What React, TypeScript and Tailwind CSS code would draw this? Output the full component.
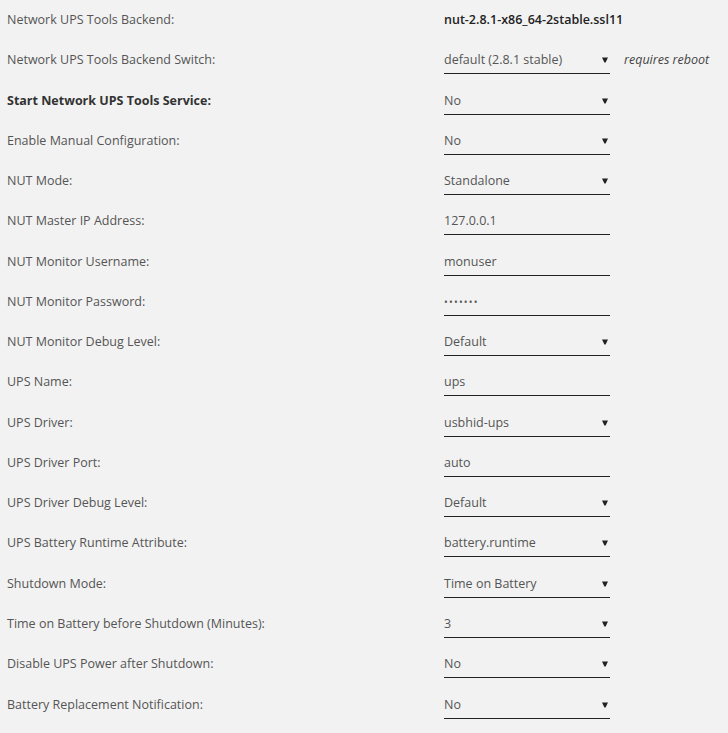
import React from "react";

type Field =
  | { label: string; kind: "static"; value: string; bold?: boolean }
  | { label: string; kind: "select"; value: string; bold?: boolean; note?: string }
  | { label: string; kind: "input"; value: string; bold?: boolean };

const fields: Field[] = [
  { label: "Network UPS Tools Backend:", kind: "static", value: "nut-2.8.1-x86_64-2stable.ssl11" },
  { label: "Network UPS Tools Backend Switch:", kind: "select", value: "default (2.8.1 stable)", note: "requires reboot" },
  { label: "Start Network UPS Tools Service:", kind: "select", value: "No", bold: true },
  { label: "Enable Manual Configuration:", kind: "select", value: "No" },
  { label: "NUT Mode:", kind: "select", value: "Standalone" },
  { label: "NUT Master IP Address:", kind: "input", value: "127.0.0.1" },
  { label: "NUT Monitor Username:", kind: "input", value: "monuser" },
  { label: "NUT Monitor Password:", kind: "input", value: "•••••••" },
  { label: "NUT Monitor Debug Level:", kind: "select", value: "Default" },
  { label: "UPS Name:", kind: "input", value: "ups" },
  { label: "UPS Driver:", kind: "select", value: "usbhid-ups" },
  { label: "UPS Driver Port:", kind: "input", value: "auto" },
  { label: "UPS Driver Debug Level:", kind: "select", value: "Default" },
  { label: "UPS Battery Runtime Attribute:", kind: "select", value: "battery.runtime" },
  { label: "Shutdown Mode:", kind: "select", value: "Time on Battery" },
  { label: "Time on Battery before Shutdown (Minutes):", kind: "select", value: "3" },
  { label: "Disable UPS Power after Shutdown:", kind: "select", value: "No" },
  { label: "Battery Replacement Notification:", kind: "select", value: "No" },
];

function Caret() {
  return (
    <svg width="6" height="6" viewBox="0 0 6 6" className="shrink-0">
      <path d="M0 0.5 H6 L3.6 5.5 H2.4 Z" fill="#222" />
    </svg>
  );
}

function Control({ field }: { field: Field }) {
  if (field.kind === "static") {
    return <span className="font-semibold text-[#222]">{field.value}</span>;
  }
  return (
    <div className="flex items-start">
      <div className="w-[166px] h-[24px] border-b border-[#222] flex items-start justify-between pr-[2px]">
        <span className={field.value.startsWith("•") ? "text-[10px] tracking-[1.2px]" : ""}>
          {field.value}
        </span>
        {field.kind === "select" && (
          <span className="h-[20px] flex items-center">
            <Caret />
          </span>
        )}
      </div>
      {field.kind === "select" && field.note && (
        <span className="ml-[14px] italic text-[#444]">{field.note}</span>
      )}
    </div>
  );
}

export default function App() {
  return (
    <div
      className="min-h-[733px] w-full bg-[#f2f2f2] text-[12.5px] leading-[20px] text-[#555]"
      style={{ fontFamily: '"Open Sans", "Liberation Sans", sans-serif' }}
    >
      {fields.map((f) => (
        <div key={f.label} className="flex items-start h-[40.28px] pt-[10px] pl-[7px]">
          <div className={`w-[437px] shrink-0 ${f.bold ? "font-bold text-[#333]" : ""}`}>
            {f.label}
          </div>
          <Control field={f} />
        </div>
      ))}
    </div>
  );
}
